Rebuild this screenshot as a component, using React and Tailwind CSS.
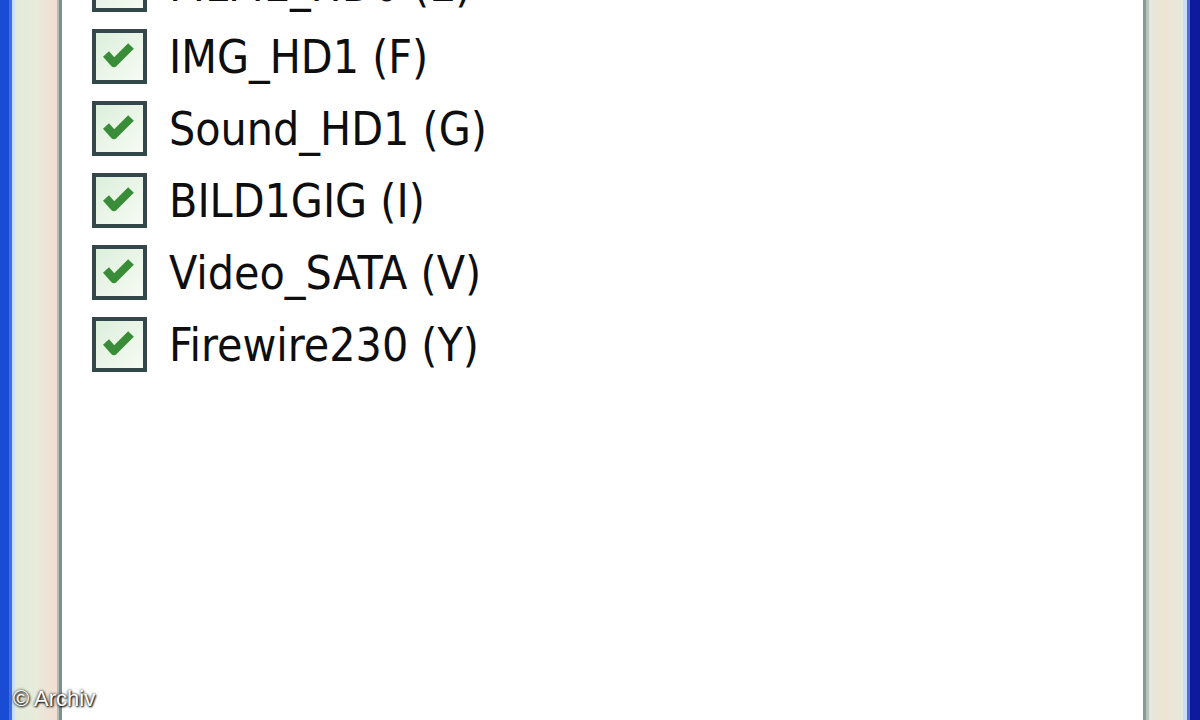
import React from "react";

const drives = [
  "FILME_HD0 (E)",
  "IMG_HD1 (F)",
  "Sound_HD1 (G)",
  "BILD1GIG (I)",
  "Video_SATA (V)",
  "Firewire230 (Y)",
];

function XpCheck() {
  return (
    <div className="w-[55px] h-[55px] shrink-0 border-[4px] border-[#34474a] bg-linear-to-br from-[#dcefdc] to-[#f7fbf4]">
      <svg viewBox="0 0 47 47" className="w-full h-full">
        <polyline
          points="10,21 18,30 35,13"
          fill="none"
          stroke="#3a8d38"
          strokeWidth="8"
          strokeLinejoin="round"
        />
      </svg>
    </div>
  );
}

export default function App() {
  return (
    <div className="relative w-[1200px] h-[720px] overflow-hidden flex bg-white">
      {/* left window frame */}
      <div className="w-[9px] bg-[#1a4bd3]" />
      <div className="w-[3px] bg-[#3d6fe0]" />
      <div className="w-[3px] bg-[#c9dcf8]" />
      <div className="w-[42px] bg-linear-to-r from-[#e2ecdc] via-[#e9ebdb] to-[#f2ddd2]" />
      <div className="w-[2px] bg-[#b3bdb8]" />
      <div className="w-[3px] bg-[#7e8e8d]" />

      {/* list box */}
      <div className="flex-1 bg-white overflow-hidden">
        <div className="-mt-[52px] pl-[30px] flex flex-col">
          {drives.map((d) => (
            <div key={d} className="h-[72px] flex items-center gap-[22px]">
              <XpCheck />
              <span
                className="text-[46px] leading-none text-[#0e0e0e] pt-[2px]"
                style={{ fontFamily: '"DejaVu Sans Condensed", "Liberation Sans", sans-serif' }}
              >
                {d}
              </span>
            </div>
          ))}
        </div>
      </div>

      {/* right window frame */}
      <div className="w-[3px] bg-[#8a9896]" />
      <div className="w-[3px] bg-[#b9c3bf]" />
      <div className="w-[34px] bg-linear-to-r from-[#e4e6dc] via-[#efe4d4] to-[#e2ebdc]" />
      <div className="w-[4px] bg-[#cfdcf5]" />
      <div className="w-[3px] bg-[#4f6fe0]" />
      <div className="w-[10px] bg-[#0d1a9c]" />

      <div
        className="absolute left-[13px] bottom-[10px] text-[22px] leading-none text-white"
        style={{ fontFamily: '"Liberation Sans", Arial, sans-serif', textShadow: "0 0 3px #000, 1px 1px 2px #000" }}
      >
        © Archiv
      </div>
    </div>
  );
}
